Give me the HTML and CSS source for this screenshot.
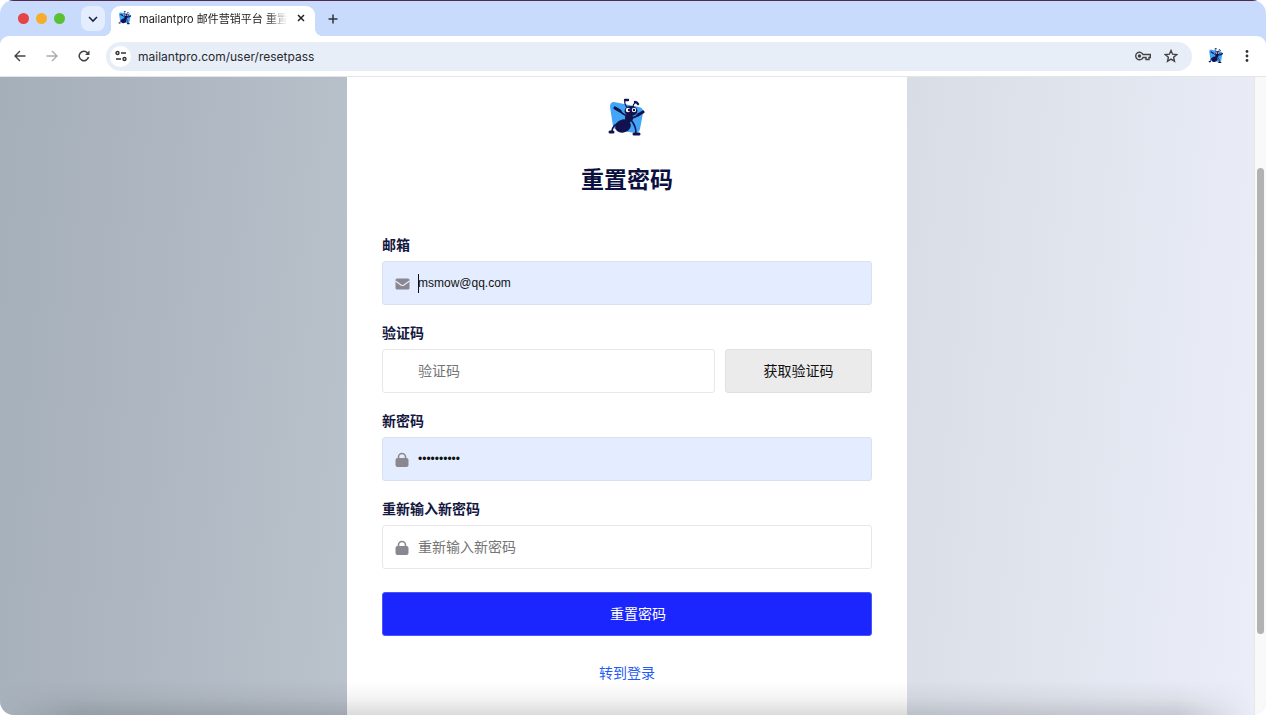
FILE: index.html
```html
<!DOCTYPE html>
<html lang="zh-CN">
<head>
  <meta charset="UTF-8">
  <meta name="viewport" content="width=device-width, initial-scale=1.0">
  <title>mailantpro 邮件营销平台 重置密码</title>
  <link rel="stylesheet" href="styles.css">
</head>
<body>
  <svg class="sprite" aria-hidden="true">
    <symbol id="ant" viewBox="0 0 38 40">
      <path d="M6 4 L16 6 L31 9 Q36 10 35 15 L32 31 Q31 35 27 35 L9 32 Q6 31 5 28 L2 9 Q2 4 6 4 Z" fill="#42a5f5"/>
      <g fill="none" stroke="#12124f" stroke-linecap="round" stroke-linejoin="round">
        <path d="M19 9 Q16 6 17 2 M25 9 Q25 6 27 5" stroke-width="1.200"/>
        <path d="M17 2 L20 2 M27 4 Q29 4 30 6" stroke-width="2.400"/>
        <path d="M19 18 Q14 16 12 13 M23 20 Q29 19 31 16" stroke-width="1.800"/>
        <path d="M7 10 L12 13 M30 17 L35 14" stroke-width="3.200"/>
        <path d="M12 25 Q5 26 4 33 M23 22 Q28 28 28 35" stroke-width="1.600"/>
        <path d="M2 34 L5 34 M26 36 L31 36" stroke-width="3"/>
      </g>
      <g fill="#12124f">
        <ellipse cx="23" cy="13" rx="6.500" ry="5"/>
        <ellipse cx="21" cy="20" rx="4" ry="4"/>
        <ellipse cx="15" cy="28" rx="8" ry="6.500" transform="rotate(-20 15 28)"/>
      </g>
      <circle cx="20" cy="12" r="2.200" fill="#fff"/>
      <circle cx="26" cy="12" r="2.200" fill="#fff"/>
      <circle cx="21" cy="12" r="1.200" fill="#12124f"/>
      <circle cx="26" cy="12" r="1.200" fill="#12124f"/>
    </symbol>
    <symbol id="lock" viewBox="0 0 14 16">
      <path d="M3.500 7 V5 a3.500 3.500 0 0 1 7 0 V7" fill="none" stroke="currentColor" stroke-width="1.600"/>
      <rect x="0.500" y="6" width="13" height="9" rx="2" fill="currentColor"/>
    </symbol>
  </svg>

  <div class="browser">
    <!-- tabs -->
    <div class="tab-bar">
      <div class="lights">
        <span class="light red"></span>
        <span class="light yellow"></span>
        <span class="light green"></span>
      </div>
      <button class="tab-search" aria-label="搜索标签页">
        <svg width="10" height="8" viewBox="0 0 10 8"><path d="M1 2 L5 6 L9 2" fill="none" stroke="#1b2344" stroke-width="1.600"/></svg>
      </button>
      <div class="tab">
        <svg class="favicon" width="14" height="14"><use href="#ant"/></svg>
        <span class="tab-title">mailantpro 邮件营销平台 重置密码</span>
        <button class="icon-btn" aria-label="关闭">
          <svg width="8" height="8" viewBox="0 0 8 8"><path d="M1 1 L7 7 M7 1 L1 7" stroke="#222" stroke-width="1.500"/></svg>
        </button>
      </div>
      <button class="icon-btn new-tab" aria-label="新标签页">
        <svg width="10" height="10" viewBox="0 0 10 10"><path d="M5 0.500 V9.500 M0.500 5 H9.500" stroke="#333" stroke-width="1.500"/></svg>
      </button>
    </div>

    <!-- toolbar -->
    <div class="toolbar">
      <div class="nav">
        <button class="icon-btn" aria-label="后退">
          <svg width="12" height="12" viewBox="0 0 12 12"><path d="M11.500 6 H1.500 M6 1 L1 6 L6 11" fill="none" stroke="#444" stroke-width="1.400"/></svg>
        </button>
        <button class="icon-btn" aria-label="前进">
          <svg width="12" height="12" viewBox="0 0 12 12"><path d="M0.500 6 H10.500 M6 1 L11 6 L6 11" fill="none" stroke="#aaa" stroke-width="1.400"/></svg>
        </button>
        <button class="icon-btn" aria-label="刷新">
          <svg width="12" height="12" viewBox="0 0 12 12"><path d="M10.500 7 A4.700 4.700 0 1 1 9.500 3 L10.500 4" fill="none" stroke="#444" stroke-width="1.500"/><path d="M11.500 0.500 V5 H7 Z" fill="#444"/></svg>
        </button>
      </div>
      <div class="address">
        <span class="site-info">
          <svg width="12" height="12" viewBox="0 0 12 12" fill="none" stroke="#333" stroke-width="1.400"><circle cx="2.500" cy="3" r="1.500"/><path d="M6 3 H11 M1 9 H6"/><circle cx="9.500" cy="9" r="1.500"/></svg>
        </span>
        <input class="url" type="text" aria-label="地址" value="mailantpro.com/user/resetpass">
        <button class="icon-btn" aria-label="密码">
          <svg width="16" height="10" viewBox="0 0 16 10" fill="none" stroke="#444" stroke-width="1.400"><path d="M8 3.500 A3.800 3.800 0 1 0 8 6.500 H11 V8.500 H14 V6.500 H15.300 V3.500 Z"/><circle cx="4.500" cy="5" r="1" fill="#444"/></svg>
        </button>
        <button class="icon-btn" aria-label="收藏">
          <svg width="14" height="14" viewBox="0 0 14 14"><path d="M7 1.500 L8.600 5.200 L12.700 5.600 L9.600 8.200 L10.500 12.200 L7 10.100 L3.500 12.200 L4.400 8.200 L1.300 5.600 L5.400 5.200 Z" fill="none" stroke="#444" stroke-width="1.400"/></svg>
        </button>
      </div>
      <div class="toolbar-end">
        <button class="icon-btn" aria-label="个人资料"><svg width="16" height="16"><use href="#ant"/></svg></button>
        <button class="icon-btn" aria-label="菜单">
          <svg width="4" height="12" viewBox="0 0 4 12" fill="#333"><circle cx="2" cy="1.500" r="1.400"/><circle cx="2" cy="6" r="1.400"/><circle cx="2" cy="10.500" r="1.400"/></svg>
        </button>
      </div>
    </div>

    <!-- page -->
    <div class="viewport">
      <main class="page">
        <form class="card">
          <svg class="logo" width="38" height="40"><use href="#ant"/></svg>
          <h1>重置密码</h1>

          <label for="email">邮箱</label>
          <div class="field filled">
            <svg class="field-icon" width="15" height="16" viewBox="0 0 15 16"><rect x="0.500" y="2.500" width="14" height="11" rx="1.500" fill="currentColor"/><path d="M0.500 5 L6 9 Q7.500 10 9 9 L14.500 5" fill="none" stroke="#e4edff" stroke-width="1.200"/></svg>
            <span class="caret"></span>
            <input type="email" id="email" value="msmow@qq.com">
          </div>

          <label for="code">验证码</label>
          <div class="code-row">
            <div class="field">
              <input type="text" id="code" placeholder="验证码">
            </div>
            <button type="button" class="code-btn">获取验证码</button>
          </div>

          <label for="password">新密码</label>
          <div class="field filled">
            <svg class="field-icon" width="14" height="16"><use href="#lock"/></svg>
            <input type="password" id="password" value="1234567890">
          </div>

          <label for="password2">重新输入新密码</label>
          <div class="field">
            <svg class="field-icon" width="14" height="16"><use href="#lock"/></svg>
            <input type="password" id="password2" placeholder="重新输入新密码">
          </div>

          <button type="button" class="submit">重置密码</button>
          <a class="login-link" href="#">转到登录</a>
        </form>
      </main>
      <div class="scrollbar"><div class="thumb"></div></div>
    </div>
  </div>
</body>
</html>
```

FILE: styles.css
```css
* {
  box-sizing: border-box;
}

body {
  margin: 0;
  background-color: white;
  font-family: "Liberation Sans", "Noto Sans CJK SC", sans-serif;
  font-size: 14px;
}

button,
input {
  font-family: inherit;
  font-size: inherit;
}

.sprite {
  display: none;
}

.browser {
  height: 100vh;
  display: flex;
  flex-direction: column;
  overflow: hidden;
  border-radius: 14px;
  background-color: #c9dbfd;
}

/* tabs */
.tab-bar {
  height: 36px;
  flex: none;
  display: flex;
  align-items: center;
  padding-left: 18px;
  border-top: 1px solid #532a4d;
}

.lights {
  display: flex;
  gap: 7px;
}

.light {
  width: 11px;
  height: 11px;
  border-radius: 50%;
}

.red {
  background-color: #e54345;
}

.yellow {
  background-color: #f5ae2c;
}

.green {
  background-color: #59c132;
}

.icon-btn {
  display: flex;
  padding: 0;
  border: none;
  background: none;
  cursor: pointer;
}

.tab-search {
  display: flex;
  align-items: center;
  justify-content: center;
  width: 24px;
  height: 25px;
  margin: 0 6px 0 16px;
  padding: 0;
  border: none;
  border-radius: 8px;
  background-color: #e4edfd;
}

.tab {
  position: relative;
  align-self: flex-end;
  display: flex;
  align-items: center;
  width: 204px;
  height: 30px;
  padding: 0 10px 6px 7px;
  border-radius: 9px 9px 0 0;
  background-color: white;
}

/* curved feet of the active tab */
.tab::before,
.tab::after {
  content: "";
  position: absolute;
  bottom: 0;
  width: 8px;
  height: 8px;
}

.tab::before {
  left: -8px;
  background: radial-gradient(circle at 0 0, transparent 8px, white 8px);
}

.tab::after {
  right: -8px;
  background: radial-gradient(circle at 100% 0, transparent 8px, white 8px);
}

.favicon {
  flex: none;
  margin-right: 7px;
}

.tab-title {
  flex: 1;
  margin-right: 10px;
  overflow: hidden;
  white-space: nowrap;
  font-family: Inter, "Noto Sans CJK SC", sans-serif;
  font-size: 11px;
  color: #222;
  -webkit-mask-image: linear-gradient(to left, transparent, black 20px);
  mask-image: linear-gradient(to left, transparent, black 20px);
}

.new-tab {
  margin-left: 13px;
}

/* toolbar */
.toolbar {
  height: 41px;
  flex: none;
  display: flex;
  align-items: center;
  gap: 16px;
  padding: 0 17px 0 14px;
  border-bottom: 1px solid #e3e5e8;
  border-radius: 9px 9px 0 0;
  background-color: white;
}

.nav {
  display: flex;
  gap: 20px;
}

.toolbar-end {
  display: flex;
  align-items: center;
  gap: 21px;
}

.address {
  flex: 1;
  display: flex;
  align-items: center;
  gap: 13px;
  height: 29px;
  padding: 0 14px 0 4px;
  border-radius: 15px;
  background-color: #e8eef8;
}

.site-info {
  display: flex;
  align-items: center;
  justify-content: center;
  width: 21px;
  height: 21px;
  margin-right: -6px;
  border-radius: 50%;
  background-color: white;
}

.url {
  flex: 1;
  padding: 0;
  border: none;
  outline: none;
  background: none;
  font-family: Inter, sans-serif;
  font-size: 12px;
  color: #27292d;
}

/* page */
.viewport {
  position: relative;
  flex: 1;
  min-height: 0;
  display: flex;
}

/* shadow along the bottom edge */
.viewport::after {
  content: "";
  position: absolute;
  left: 0;
  right: 0;
  bottom: 0;
  height: 34px;
  background: linear-gradient(to bottom, transparent, rgba(40, 40, 40, 0.05) 50%, rgba(40, 40, 40, 0.17));
  -webkit-mask-image: linear-gradient(to right, transparent, black 80px, black 93%, transparent 99%);
  mask-image: linear-gradient(to right, transparent, black 80px, black 93%, transparent 99%);
  pointer-events: none;
}

.page {
  flex: 1;
  display: flex;
  justify-content: center;
  overflow: hidden;
  background: linear-gradient(95deg, #a5afb9, #b8c0ca 28%, #d9dee7 72%, #ebeef8);
}

.card {
  width: 560px;
  display: flex;
  flex-direction: column;
  padding: 21px 35px;
  background-color: white;
}

.logo {
  align-self: center;
}

h1 {
  margin: 25px 0 38px;
  font-size: 23px;
  line-height: 34px;
  text-align: center;
  color: #0c103f;
}

label {
  margin-bottom: 6px;
  line-height: 20px;
  font-weight: bold;
  color: #14183f;
}

.field {
  position: relative;
  flex: none;
  height: 44px;
  margin-bottom: 18px;
}

.field input {
  width: 100%;
  height: 100%;
  padding: 0 12px 0 35px;
  border: 1px solid #e8e8ea;
  border-radius: 3px;
  outline: none;
  background-color: white;
  color: #111;
}

.field input::placeholder {
  color: #757575;
}

.filled input {
  border-color: #d9e1ef;
  background-color: #e4edff;
  font-size: 12px;
}

.field-icon {
  position: absolute;
  top: 15px;
  left: 13px;
  color: #8b8791;
}

.caret {
  position: absolute;
  top: 13px;
  left: 36px;
  width: 1px;
  height: 19px;
  background-color: #111;
}

.code-row {
  display: flex;
  gap: 10px;
}

.code-row .field {
  flex: 1;
}

.code-btn,
.submit {
  flex: none;
  height: 44px;
  padding: 0 0 2px;
  border: 1px solid #e0e0e0;
  border-radius: 3px;
  cursor: pointer;
}

.code-btn {
  width: 30%;
  background-color: #ebebeb;
  color: #111;
}

.submit {
  margin-top: 5px;
  padding-left: 22px;
  border-color: #4a55f5;
  background-color: #1b26ff;
  color: white;
}

.login-link {
  align-self: center;
  margin-top: 27px;
  line-height: 20px;
  text-decoration: none;
  color: #1f5cf5;
}

.scrollbar {
  display: flex;
  flex-direction: column;
  width: 12px;
  padding: 0 2px;
  border-left: 1px solid #e6e7ea;
  background-color: #f9f9f9;
}

.scrollbar::before {
  content: "";
  flex: 91;
}

.scrollbar::after {
  content: "";
  flex: 81;
}

.thumb {
  flex: 466;
  border-radius: 4px;
  background-color: #b2b2b2;
}
```
